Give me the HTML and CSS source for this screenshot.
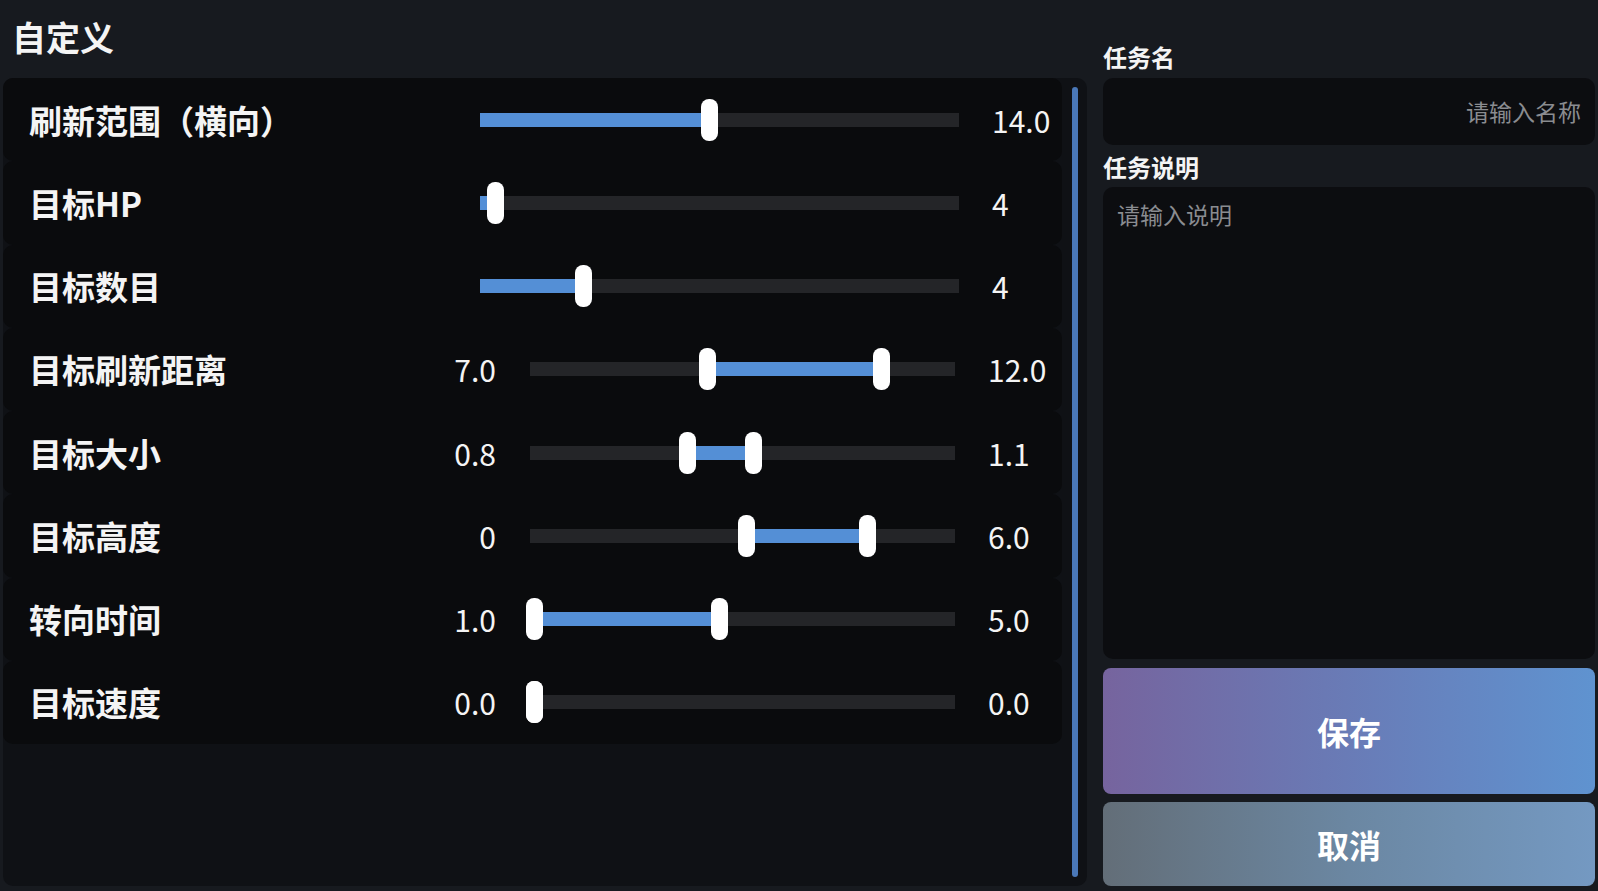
FILE: index.html
```html
<!DOCTYPE html>
<html lang="zh-CN">
<head>
<meta charset="utf-8">
<title>自定义</title>
<link rel="stylesheet" href="styles.css">
</head>
<body>
<div class="page">
  <div class="left">
    <h1 class="title">自定义</h1>
    <div class="panel">
      <div class="list">
        <div class="row single">
          <div class="label">刷新范围（横向）</div>
          <div class="track single-track">
            <div class="fill" style="left:0;width:229px"></div>
            <div class="thumb" style="left:221px"></div>
          </div>
          <div class="val-max">14.0</div>
        </div>
        <div class="row single">
          <div class="label">目标HP</div>
          <div class="track single-track">
            <div class="fill" style="left:0;width:15px"></div>
            <div class="thumb" style="left:7px"></div>
          </div>
          <div class="val-max">4</div>
        </div>
        <div class="row single">
          <div class="label">目标数目</div>
          <div class="track single-track">
            <div class="fill" style="left:0;width:104px"></div>
            <div class="thumb" style="left:95px"></div>
          </div>
          <div class="val-max">4</div>
        </div>
        <div class="row double">
          <div class="label">目标刷新距离</div>
          <div class="val-min">7.0</div>
          <div class="track double-track">
            <div class="fill" style="left:177px;width:174px"></div>
            <div class="thumb" style="left:169px"></div>
            <div class="thumb" style="left:343px"></div>
          </div>
          <div class="val-max dmax">12.0</div>
        </div>
        <div class="row double">
          <div class="label">目标大小</div>
          <div class="val-min">0.8</div>
          <div class="track double-track">
            <div class="fill" style="left:157px;width:66px"></div>
            <div class="thumb" style="left:149px"></div>
            <div class="thumb" style="left:215px"></div>
          </div>
          <div class="val-max dmax">1.1</div>
        </div>
        <div class="row double">
          <div class="label">目标高度</div>
          <div class="val-min">0</div>
          <div class="track double-track">
            <div class="fill" style="left:216px;width:121px"></div>
            <div class="thumb" style="left:208px"></div>
            <div class="thumb" style="left:329px"></div>
          </div>
          <div class="val-max dmax">6.0</div>
        </div>
        <div class="row double">
          <div class="label">转向时间</div>
          <div class="val-min">1.0</div>
          <div class="track double-track">
            <div class="fill" style="left:4px;width:185px"></div>
            <div class="thumb" style="left:-4px"></div>
            <div class="thumb" style="left:181px"></div>
          </div>
          <div class="val-max dmax">5.0</div>
        </div>
        <div class="row double">
          <div class="label">目标速度</div>
          <div class="val-min">0.0</div>
          <div class="track double-track">
            <div class="thumb" style="left:-4px"></div>
            <div class="thumb" style="left:-4px"></div>
          </div>
          <div class="val-max dmax">0.0</div>
        </div>
      </div>
      <div class="scrollbar"></div>
    </div>
  </div>
  <div class="right">
    <div class="field-label">任务名</div>
    <div class="input name-input"><span class="placeholder">请输入名称</span></div>
    <div class="field-label second">任务说明</div>
    <div class="input desc-input"><span class="placeholder">请输入说明</span></div>
    <button class="btn save">保存</button>
    <button class="btn cancel">取消</button>
  </div>
</div>
</body>
</html>
```
FILE: styles.css
```css
* { box-sizing: border-box; }
html, body {
  margin: 0;
  padding: 0;
  background: #171a1f;
  font-family: "Noto Sans CJK SC", "Noto Sans", sans-serif;
  color: #f4f4f4;
}
.page {
  display: flex;
  height: 891px;
  padding: 0 3px 5px 3px;
  gap: 16px;
}
.left {
  width: 1084px;
  display: flex;
  flex-direction: column;
}
.title {
  margin: 0;
  height: 78px;
  padding: 14px 0 0 9px;
  font-size: 34px;
  line-height: 46px;
  font-weight: 700;
}
.panel {
  flex: 1;
  background: #0f1115;
  border-radius: 10px;
  display: flex;
  padding-right: 9px;
}
.list {
  width: 1059px;
  display: flex;
  flex-direction: column;
}
.row {
  height: 83.25px;
  background: #0a0b0d;
  border-radius: 10px;
  display: flex;
  align-items: center;
  padding-left: 26px;
}
.label {
  font-size: 33px;
  font-weight: 700;
  line-height: 46px;
  white-space: nowrap;
}
.single .label { width: 451px; }
.double .label { width: 407px; }
.val-min {
  width: 60px;
  text-align: right;
  font-size: 30px;
  line-height: 42px;
}
.val-max {
  margin-left: 33px;
  font-size: 30px;
  line-height: 42px;
}
.dmax { margin-left: 33px; }
.track {
  position: relative;
  height: 14px;
  background: #242528;
}
.single-track { width: 479px; }
.double-track { width: 425px; margin-left: 34px; }
.fill {
  position: absolute;
  top: 0;
  height: 14px;
  background: #548fd6;
}
.thumb {
  position: absolute;
  top: -14px;
  width: 17px;
  height: 42px;
  background: #ffffff;
  border-radius: 8px;
}
.scrollbar {
  width: 6px;
  margin: 9px 0 9px 10px;
  background: #4a78b8;
  border-radius: 3px;
}
.right {
  width: 492px;
  display: flex;
  flex-direction: column;
  padding-top: 40px;
}
.field-label {
  font-size: 24px;
  font-weight: 700;
  line-height: 34px;
  height: 34px;
  margin-bottom: 4px;
}
.field-label.second {
  margin-top: 5px;
  margin-bottom: 3px;
}
.input {
  background: #0c0d10;
  border-radius: 10px;
  font-size: 23px;
  line-height: 34px;
  color: #8a8c90;
}
.name-input {
  height: 67px;
  display: flex;
  align-items: center;
  justify-content: flex-end;
  padding-right: 14px;
}
.desc-input {
  height: 473px;
  padding: 10px 14px;
}
.placeholder { white-space: nowrap; }
.btn {
  border: none;
  border-radius: 8px;
  color: #ffffff;
  font-family: "Noto Sans CJK SC", "Noto Sans", sans-serif;
  font-size: 32px;
  font-weight: 700;
  padding: 0;
}
.save {
  margin-top: 9px;
  height: 126px;
  background: linear-gradient(to right, #76649e, #6a79b4 45%, #5f93d0);
}
.cancel {
  margin-top: 8px;
  height: 84px;
  background: linear-gradient(to right, #636e78, #6b87a2 50%, #7499c2);
}
```
